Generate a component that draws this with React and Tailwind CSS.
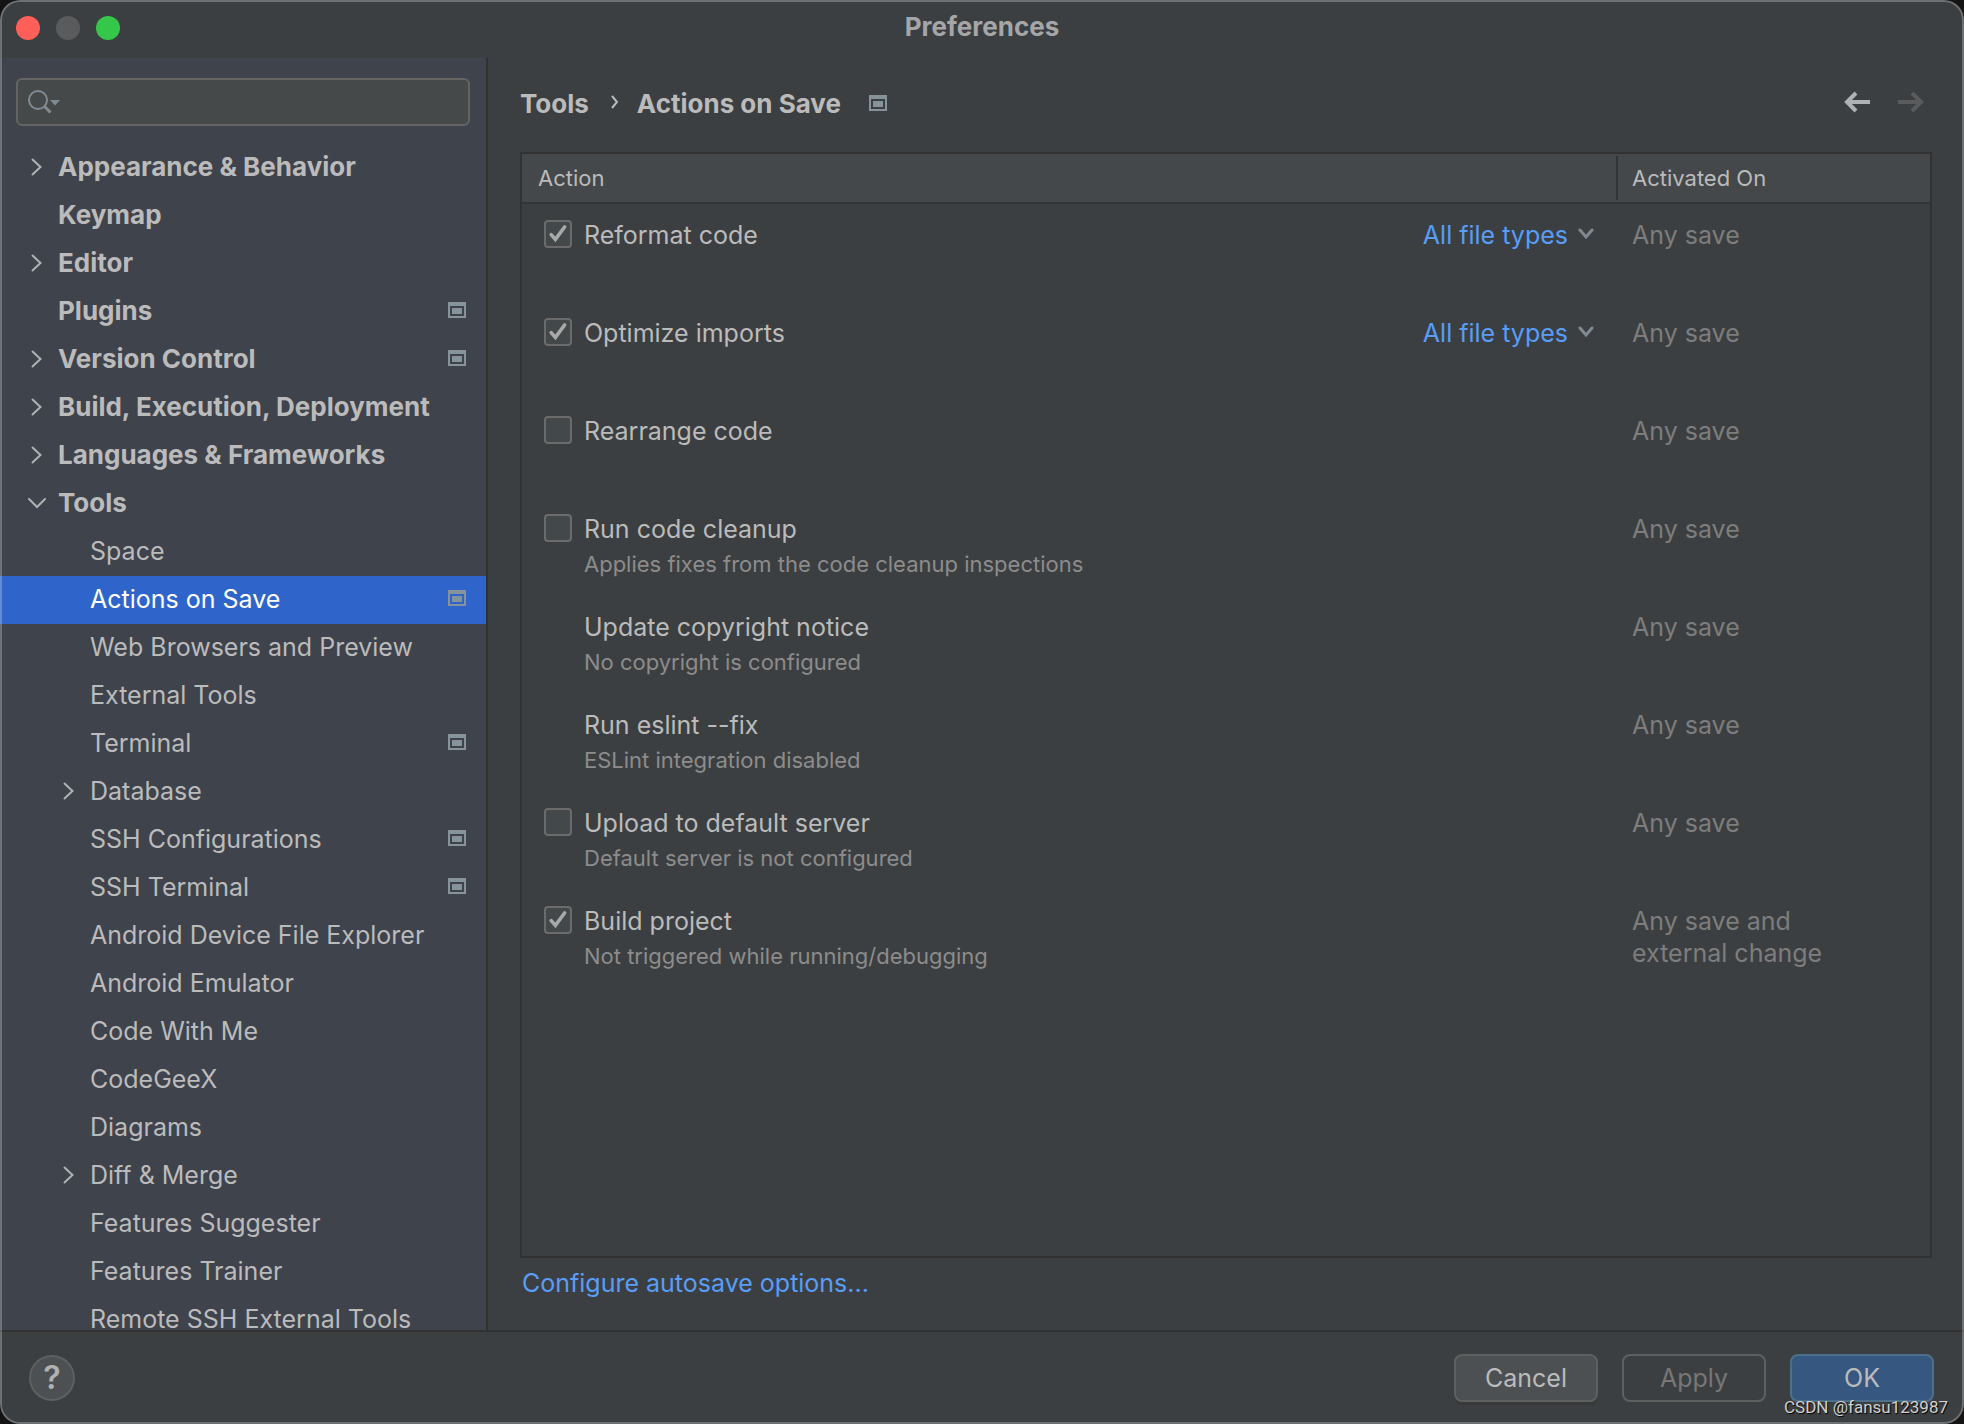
import React, { useState } from "react";

const treeItems = [
  { label: "Appearance & Behavior", arrow: "right" },
  { label: "Keymap" },
  { label: "Editor", arrow: "right" },
  { label: "Plugins", project: true },
  { label: "Version Control", arrow: "right", project: true },
  { label: "Build, Execution, Deployment", arrow: "right" },
  { label: "Languages & Frameworks", arrow: "right" },
  { label: "Tools", arrow: "down" },
  { label: "Space", child: true },
  { label: "Actions on Save", child: true, project: true },
  { label: "Web Browsers and Preview", child: true },
  { label: "External Tools", child: true },
  { label: "Terminal", child: true, project: true },
  { label: "Database", child: true, arrow: "right" },
  { label: "SSH Configurations", child: true, project: true },
  { label: "SSH Terminal", child: true, project: true },
  { label: "Android Device File Explorer", child: true },
  { label: "Android Emulator", child: true },
  { label: "Code With Me", child: true },
  { label: "CodeGeeX", child: true },
  { label: "Diagrams", child: true },
  { label: "Diff & Merge", child: true, arrow: "right" },
  { label: "Features Suggester", child: true },
  { label: "Features Trainer", child: true },
  { label: "Remote SSH External Tools", child: true },
];

const initialActions = [
  { id: "reformat", name: "Reformat code", checked: true, fileTypes: true },
  { id: "imports", name: "Optimize imports", checked: true, fileTypes: true },
  { id: "rearrange", name: "Rearrange code", checked: false },
  {
    id: "cleanup",
    name: "Run code cleanup",
    checked: false,
    note: "Applies fixes from the code cleanup inspections",
  },
  { id: "copyright", name: "Update copyright notice", note: "No copyright is configured" },
  { id: "eslint", name: "Run eslint --fix", note: "ESLint integration disabled" },
  {
    id: "upload",
    name: "Upload to default server",
    checked: false,
    note: "Default server is not configured",
  },
  {
    id: "build",
    name: "Build project",
    checked: true,
    note: "Not triggered while running/debugging",
    activatedOn: "Any save and external change",
  },
];

function ProjectIcon() {
  return (
    <svg className="shrink-0" width="18" height="16" viewBox="0 0 18 16" fill="#87939a">
      <path fillRule="evenodd" d="M0 0h18v16H0zM2 4v10h14V4z" />
      <path d="M4 6h10v6H4z" />
    </svg>
  );
}

function TreeArrow({ direction }) {
  return (
    <svg
      width="20"
      height="20"
      viewBox="0 0 20 20"
      fill="none"
      stroke="#afb1b3"
      strokeWidth="2"
      strokeLinecap="round"
    >
      {direction === "down" ? (
        <path d="M3 5l8 8 8-8" />
      ) : (
        <path d="M6.5 1.5l8 7.5-8 7.5" />
      )}
    </svg>
  );
}

function ActionRow({ action, onToggle }) {
  const hasCheckbox = action.checked !== undefined;

  return (
    <tr className="h-[98px] align-top">
      <td className="pt-[15px] pl-[22px] pr-[22px]">
        <div className="flex items-start">
          <span className="grid w-10 shrink-0 pt-px">
            {hasCheckbox && (
              <>
                <input
                  id={action.id}
                  type="checkbox"
                  checked={action.checked}
                  onChange={() => onToggle(action.id)}
                  className="col-start-1 row-start-1 size-7 appearance-none rounded border-2 border-[#6b6b6b] bg-[#43494a]"
                />
                {action.checked && (
                  <svg
                    className="pointer-events-none col-start-1 row-start-1"
                    width="28"
                    height="28"
                    viewBox="0 0 28 28"
                    fill="none"
                    stroke="#a9a9a9"
                    strokeWidth="3.6"
                    strokeLinecap="round"
                  >
                    <path d="M7.2 14.6L11.4 19.4L20.6 7" />
                  </svg>
                )}
              </>
            )}
          </span>
          <div className="flex-1">
            {hasCheckbox ? (
              <label htmlFor={action.id} className="block leading-8">
                {action.name}
              </label>
            ) : (
              <div className="leading-8">{action.name}</div>
            )}
            {action.note && (
              <p className="pt-[3px] text-[22px] leading-8 text-[#8c8c8c]">{action.note}</p>
            )}
          </div>
          {action.fileTypes && (
            <button type="button" className="flex items-center gap-2.5 leading-8 text-[#589df6]">
              All file types
              <svg
                width="16"
                height="16"
                viewBox="0 0 16 16"
                fill="none"
                stroke="#7f8b91"
                strokeWidth="3"
                strokeLinecap="round"
              >
                <path d="M2 3l6 7 6-7" />
              </svg>
            </button>
          )}
        </div>
      </td>
      <td className="pt-[15px] pl-4 pr-20 leading-8 text-[#7d7d7d]">
        {action.activatedOn || "Any save"}
      </td>
    </tr>
  );
}

function App() {
  const [selected, setSelected] = useState("Actions on Save");
  const [actions, setActions] = useState(initialActions);

  const toggleAction = (id) => {
    setActions(actions.map((a) => (a.id === id ? { ...a, checked: !a.checked } : a)));
  };

  return (
    <div className="h-screen bg-[#141414]">
      <div className="relative flex h-full flex-col overflow-hidden rounded-[20px] bg-[#3c3f41] font-['Inter',sans-serif] text-[25px] text-[#bbbbbb]">
        {/* Title bar */}
        <header className="flex h-[58px] shrink-0 items-center px-4 pb-0.5">
          <div className="flex flex-1 gap-4">
            <button type="button" aria-label="Close" className="size-6 rounded-full bg-[#fe5f58]" />
            <button type="button" aria-label="Minimize" className="size-6 rounded-full bg-[#5a5b5d]" />
            <button type="button" aria-label="Zoom" className="size-6 rounded-full bg-[#35c749]" />
          </div>
          <h1 className="pb-[3px] text-[26px] font-bold text-[#a4a6a8]">Preferences</h1>
          <div className="flex-1" />
        </header>

        <div className="flex min-h-0 flex-1">
          {/* Settings tree */}
          <aside className="flex w-[488px] shrink-0 flex-col overflow-hidden border-r-2 border-[#323232] bg-[#3f434c]">
            <div className="px-4 pt-5 pb-[18px]">
              <label className="flex h-12 items-center rounded-md border-2 border-[#646464] bg-[#45494a] px-2">
                <svg className="shrink-0" width="36" height="28" viewBox="0 0 36 28" fill="none">
                  <circle cx="12" cy="12" r="9" stroke="#7f8b91" strokeWidth="2" />
                  <path d="M18.5 18.5l6 6" stroke="#7f8b91" strokeWidth="3" />
                  <path d="M24 12h10l-5 5.5z" fill="#7f8b91" />
                </svg>
                <input
                  type="text"
                  aria-label="Search settings"
                  className="min-w-0 flex-1 bg-transparent outline-none"
                />
              </label>
            </div>
            <ul>
              {treeItems.map((item) => (
                <li key={item.label}>
                  <button
                    type="button"
                    onClick={() => setSelected(item.label)}
                    className={`flex h-12 w-full items-center pr-5 text-left whitespace-nowrap ${
                      item.child ? "pl-[58px]" : "pl-[26px] text-[26px] font-bold"
                    } ${selected === item.label ? "bg-[#2f65ca] text-white" : ""}`}
                  >
                    <span className="w-8 shrink-0">
                      {item.arrow && <TreeArrow direction={item.arrow} />}
                    </span>
                    <span className={`flex-1 ${item.child ? "" : "pb-[3px]"}`}>{item.label}</span>
                    {item.project && (
                      <span className="pb-1">
                        <ProjectIcon />
                      </span>
                    )}
                  </button>
                </li>
              ))}
            </ul>
          </aside>

          {/* Page */}
          <main className="flex min-w-0 flex-1 flex-col pr-8 pl-8">
            <div className="flex h-[94px] shrink-0 items-center pb-1">
              <h2 className="flex flex-1 items-center text-[26px] font-bold">
                Tools
                <svg
                  className="mr-[18px] ml-5"
                  width="10"
                  height="16"
                  viewBox="0 0 10 16"
                  fill="none"
                  stroke="#bbbbbb"
                  strokeWidth="2"
                >
                  <path d="M3 1l5 6-5 6" />
                </svg>
                <span className="mr-7">Actions on Save</span>
                <ProjectIcon />
              </h2>
              <div className="flex gap-7 pr-2 pb-0.5">
                <button type="button" aria-label="Back">
                  <svg width="26" height="22" viewBox="0 0 26 22" fill="none" stroke="#afb1b3" strokeWidth="4">
                    <path d="M3 11h23M12 2L3 11l9 9" />
                  </svg>
                </button>
                <button type="button" aria-label="Forward" disabled>
                  <svg width="26" height="22" viewBox="0 0 26 22" fill="none" stroke="#595b5d" strokeWidth="4">
                    <path d="M0 11h23M14 2l9 9-9 9" />
                  </svg>
                </button>
              </div>
            </div>

            <div className="min-h-0 flex-1 border-2 border-[#323232]">
              <table className="w-full table-fixed border-separate border-spacing-0">
                <thead className="bg-[#45484a] text-left text-[22px]">
                  <tr className="h-[50px]">
                    <th className="border-b-2 border-[#323537] pl-4 font-normal">Action</th>
                    <th className="w-[314px] border-b-2 border-[#323537] font-normal">
                      <div className="flex h-11 items-center border-l-2 border-[#323537] pl-[14px]">
                        Activated On
                      </div>
                    </th>
                  </tr>
                </thead>
                <tbody>
                  {actions.map((action) => (
                    <ActionRow key={action.id} action={action} onToggle={toggleAction} />
                  ))}
                </tbody>
              </table>
            </div>

            <div className="flex h-[72px] shrink-0 items-start pt-[7px] pl-0.5">
              <a href="#autosave" className="text-[#589df6]">
                Configure autosave options...
              </a>
            </div>
          </main>
        </div>

        {/* Buttons */}
        <footer className="flex h-[94px] shrink-0 items-center gap-6 border-t-2 border-[#323232] pr-[30px] pl-[29px]">
          <button
            type="button"
            aria-label="Help"
            className="mr-auto flex size-[46px] items-center justify-center rounded-full border-2 border-[#5e6060] bg-[#4c5052] text-[32px] font-semibold text-[#afb1b3]"
          >
            ?
          </button>
          <button
            type="button"
            className="h-12 w-36 rounded-lg border-2 border-[#5e6060] bg-[#4c5052] pt-0.5 shadow-[0_3px_0_#37393b]"
          >
            Cancel
          </button>
          <button
            type="button"
            disabled
            className="h-12 w-36 rounded-lg border-2 border-[#5e6060] pt-0.5 text-[#777777]"
          >
            Apply
          </button>
          <button
            type="button"
            className="h-12 w-36 rounded-lg border-2 border-[#4c708c] bg-[#365880] pt-0.5"
          >
            OK
          </button>
        </footer>

        <span className="absolute right-4 bottom-[5px] font-['Roboto',sans-serif] text-[17px] leading-6 text-[#d0d0d0] [text-shadow:1px_1px_1px_#000]">
          CSDN @fansu123987
        </span>
        <div className="pointer-events-none absolute inset-0 rounded-[20px] border-2 border-white/25" />
      </div>
    </div>
  );
}

export default App;
